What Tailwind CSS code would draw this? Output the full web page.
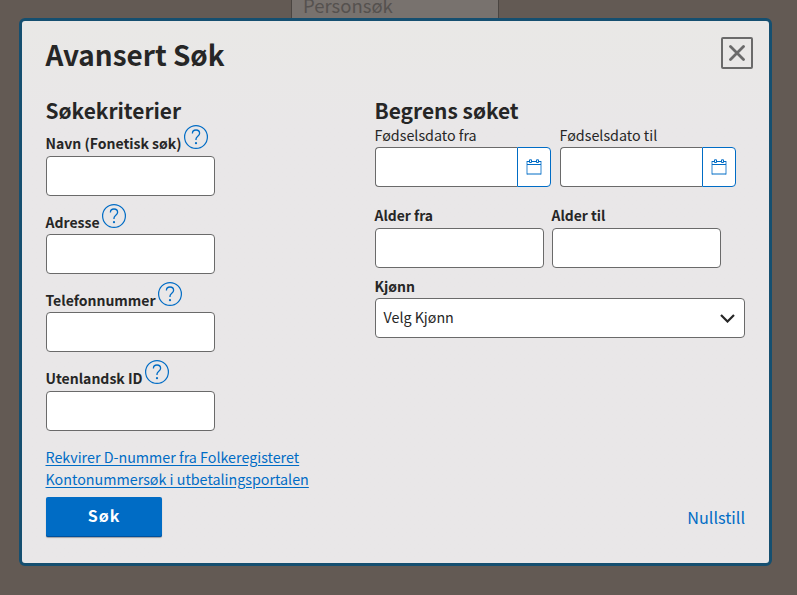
<!DOCTYPE html>
<html lang="no">
<head>
<meta charset="utf-8">
<title>Avansert Søk</title>
<script src="https://cdn.jsdelivr.net/npm/@tailwindcss/browser@4"></script>
</head>
<body class="relative h-[595px] w-[797px] overflow-hidden bg-[#635a54] font-['Noto_Sans_CJK_SC','Noto_Sans',sans-serif] text-[14px] text-[#262626]">
<svg class="hidden">
  <symbol id="help" viewBox="0 0 24 24" fill="none" stroke="#006cc5">
    <circle cx="12" cy="12" r="11.4" stroke-width="1.2"/>
    <path d="M8.400 8.500C8.400 6.200 10 5 12 5s3.600 1.300 3.600 3.300c0 2.900-3.600 2.800-3.600 5.700v1" stroke-width="1.3"/>
    <circle cx="12" cy="18.200" r="1.100" fill="#006cc5" stroke="none"/>
  </symbol>
  <symbol id="calendar" viewBox="0 0 16 16" fill="none" stroke="#006cc5">
    <path d="M3.300 2.500H1M1 15h14M12.700 2.500H15M5.700 2.500h4.600M1 5.500h14" stroke-width="1"/>
    <path d="M1 2v13.500M15 2v13.500" stroke-width="1.100" stroke-opacity=".75"/>
    <path d="M3.500.8h2v2.700h-2zM10.500.8h2v2.700h-2z" stroke-width="1"/>
  </symbol>
</svg>
<div class="ml-[291px] h-[19px] w-[208px] border-x border-[#4a4541] bg-[#78726e] pl-[11px] text-[18.5px] leading-[10px] text-[#55514f]">Personsøk</div>

<section class="absolute left-[19px] top-[18px] flex h-[548px] w-[753px] flex-col rounded-[6px] border-3 border-[#154f70] bg-linear-to-b from-[#e9e8e6] to-[#e9e7e8] to-20% pl-6 pr-4">
  <header class="flex h-[75px] shrink-0 items-start justify-between pt-4">
    <h1 class="-ml-[0.5px] -mt-px text-[27.900px] font-bold leading-[36px]">Avansert Søk</h1>
    <button class="flex size-8 items-center justify-center rounded-[2px] border-2 border-[#6a6a6a]">
      <svg class="size-4" viewBox="0 0 16 16" stroke="#6a6a6a" stroke-width="2.800" stroke-linecap="round"><path d="M1.500 1.500l13 13M14.500 1.500l-13 13"/></svg>
    </button>
  </header>

  <div class="flex h-[336px] shrink-0">
    <div class="w-[329px]">
      <h2 class="-ml-[0.5px] h-[22px] text-[20.900px] font-bold leading-[28px]">Søkekriterier</h2>
      <div class="h-[78px]">
        <div class="-ml-[0.5px] flex h-[38px] items-start gap-[2.5px]"><label class="pt-[14px] font-bold leading-[22px]">Navn (Fonetisk søk)</label><svg class="mt-[7px] size-6"><use href="#help"/></svg></div>
        <input class="block h-10 w-[169px] rounded border border-[#6a6a6a] bg-white">
      </div>
      <div class="h-[78px]">
        <div class="-ml-[0.5px] flex h-[38px] items-start gap-[2.5px]"><label class="pt-[15px] font-bold leading-[22px]">Adresse</label><svg class="mt-2 size-6"><use href="#help"/></svg></div>
        <input class="block h-10 w-[169px] rounded border border-[#6a6a6a] bg-white">
      </div>
      <div class="h-[78px]">
        <div class="-ml-[0.5px] flex h-[38px] items-start gap-[2.5px]"><label class="pt-[15px] font-bold leading-[22px]">Telefonnummer</label><svg class="mt-2 size-6"><use href="#help"/></svg></div>
        <input class="block h-10 w-[169px] rounded border border-[#6a6a6a] bg-white">
      </div>
      <div class="h-[79px]">
        <div class="-ml-[0.5px] flex h-[39px] items-start gap-[2.5px]"><label class="pt-[15px] font-bold leading-[22px]">Utenlandsk ID</label><svg class="mt-2 size-6"><use href="#help"/></svg></div>
        <input class="block h-10 w-[169px] rounded border border-[#6a6a6a] bg-white">
      </div>
    </div>
    <div class="w-[370px]">
      <h2 class="-ml-[0.5px] h-7 text-[20.900px] font-bold leading-[28px]">Begrens søket</h2>
      <div class="flex gap-[9px]">
        <div class="w-44">
          <label class="-ml-[0.5px] block h-[23px] text-[14.3px] leading-[22px]">Fødselsdato fra</label>
          <div class="flex h-10">
            <input class="w-[142px] rounded-l border border-r-0 border-[#6a6a6a] bg-white">
            <button class="flex w-[34px] items-center justify-center rounded-r border border-[#006cc5] bg-white"><svg class="size-4"><use href="#calendar"/></svg></button>
          </div>
        </div>
        <div class="w-44">
          <label class="-ml-[0.5px] block h-[23px] text-[14.3px] leading-[22px]">Fødselsdato til</label>
          <div class="flex h-10">
            <input class="w-[142px] rounded-l border border-r-0 border-[#6a6a6a] bg-white">
            <button class="flex w-[34px] items-center justify-center rounded-r border border-[#006cc5] bg-white"><svg class="size-4"><use href="#calendar"/></svg></button>
          </div>
        </div>
      </div>
      <div class="mt-[17px] flex gap-2">
        <div><label class="-ml-[0.5px] block h-6 text-[13.900px] font-bold leading-[22px]">Alder fra</label><input class="block h-10 w-[169px] rounded border border-[#6a6a6a] bg-white"></div>
        <div><label class="-ml-[0.5px] block h-6 text-[13.900px] font-bold leading-[22px]">Alder til</label><input class="block h-10 w-[169px] rounded border border-[#6a6a6a] bg-white"></div>
      </div>
      <label class="-ml-[0.5px] mt-[7px] block h-[23px] font-bold leading-[22px]">Kjønn</label>
      <div class="flex h-10 items-center justify-between rounded border border-[#6a6a6a] bg-white pl-[7.5px] pr-[9px]">
        <span class="-mt-[2px] text-[14.3px] leading-[22px]">Velg Kjønn</span>
        <svg class="h-[9px] w-[15px]" viewBox="0 0 15 9" fill="none" stroke="#262626" stroke-width="2.200"><path d="M1 1l6.500 6.500L14 1"/></svg>
      </div>
    </div>
  </div>

  <nav class="-ml-[0.5px] mt-[14px] flex flex-col items-start text-[14.3px] leading-[22px] text-[#006cc5]">
    <a class="underline underline-offset-2">Rekvirer D-nummer fra Folkeregisteret</a>
    <a class="underline underline-offset-2">Kontonummersøk i utbetalingsportalen</a>
  </nav>
  <footer class="mt-[7px] flex items-center justify-between pr-2">
    <button class="h-10 w-[116px] rounded-[2px] bg-[#006cc5] pb-1 text-[16px] font-bold leading-[24px] tracking-[1px] text-white shadow-[inset_0_-1px_0_#00509c,0_1px_1px_rgba(0,0,0,0.3)]">Søk</button>
    <button class="text-[16.200px] leading-[24px] text-[#006cc5]">Nullstill</button>
  </footer>
</section>
</body>
</html>
